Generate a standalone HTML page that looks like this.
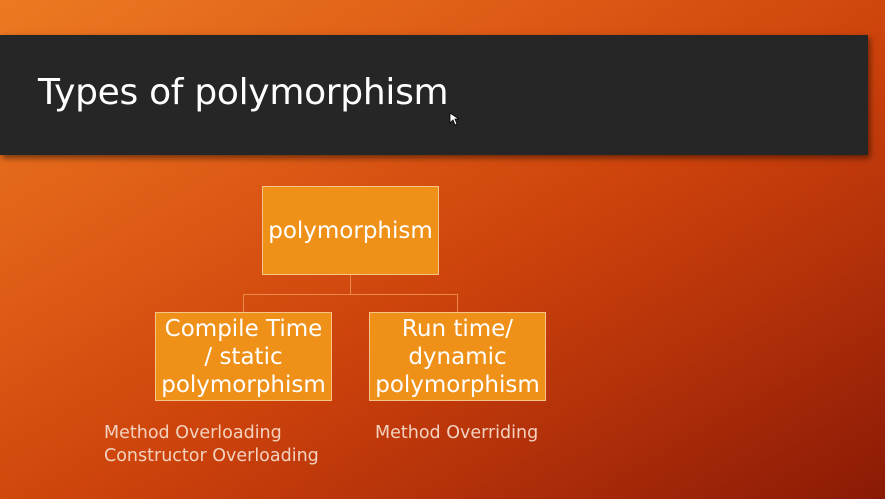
<!DOCTYPE html>
<html><head><style>
html,body{margin:0;padding:0}
body{width:885px;height:499px;overflow:hidden;position:relative;font-family:"DejaVu Sans","Liberation Sans",sans-serif;
background:linear-gradient(150deg,#ec7a22 0%,#de5c16 30%,#cc420b 55%,#b2300a 75%,#8a1a05 100%);}
.bar{position:absolute;left:0;top:35px;width:868px;height:120px;background:#262626;box-shadow:2px 3px 6px rgba(0,0,0,.5)}
.title{position:absolute;left:38px;top:72px;color:#fff;font-size:36px;letter-spacing:-0.3px}
.box{position:absolute;background:#ef9119;border:1px solid #f7c58a;color:#fff;font-size:23px;text-align:center;display:flex;align-items:center;justify-content:center;line-height:28px;box-sizing:border-box}
.ln{position:absolute;background:#e88a4a}
.t{position:absolute;color:#f3d2c0;font-size:17.5px;line-height:23px}
</style></head><body>
<div class="bar"></div>
<div class="title">Types of polymorphism</div>
<svg style="position:absolute;left:449px;top:112px" width="10" height="14"><path d="M1 1 L1 11 L4 8 L6 13 L8 12 L6 7 L10 7 Z" fill="#fff" stroke="#000" stroke-width=".8"/></svg>
<div class="ln" style="left:350px;top:275px;width:1px;height:19px"></div>
<div class="ln" style="left:243px;top:294px;width:215px;height:1px"></div>
<div class="ln" style="left:243px;top:294px;width:1px;height:18px"></div>
<div class="ln" style="left:457px;top:294px;width:1px;height:18px"></div>
<div class="box" style="left:262px;top:186px;width:177px;height:89px">polymorphism</div>
<div class="box" style="left:155px;top:312px;width:177px;height:89px">Compile Time<br>/ static<br>polymorphism</div>
<div class="box" style="left:369px;top:312px;width:177px;height:89px">Run time/<br>dynamic<br>polymorphism</div>
<div class="t" style="left:104px;top:422px">Method Overloading<br>Constructor Overloading</div>
<div class="t" style="left:375px;top:422px">Method Overriding</div>
</body></html>
